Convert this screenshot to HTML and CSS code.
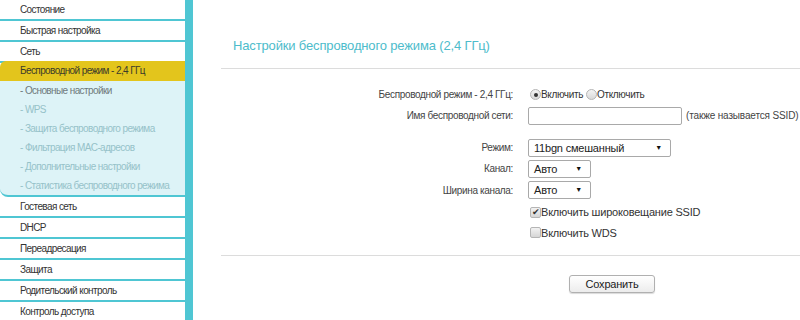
FILE: index.html
```html
<!DOCTYPE html>
<html lang="ru">
<head>
  <meta charset="UTF-8">
  <title>Настройки беспроводного режима</title>
  <link rel="stylesheet" href="styles.css">
</head>
<body>
  <div class="page">
    <div class="sidebar">
      <div class="menu-item">Состояние</div>
      <div class="menu-item">Быстрая настройка</div>
      <div class="menu-item">Сеть</div>
      <div class="menu-item active">Беспроводной режим - 2,4 ГГц</div>
      <div class="submenu">
        <div class="sub-item current">- Основные настройки</div>
        <div class="sub-item">- WPS</div>
        <div class="sub-item">- Защита беспроводного режима</div>
        <div class="sub-item">- Фильтрация MAC-адресов</div>
        <div class="sub-item">- Дополнительные настройки</div>
        <div class="sub-item">- Статистика беспроводного режима</div>
      </div>
      <div class="menu-item">Гостевая сеть</div>
      <div class="menu-item">DHCP</div>
      <div class="menu-item">Переадресация</div>
      <div class="menu-item">Защита</div>
      <div class="menu-item">Родительский контроль</div>
      <div class="menu-item">Контроль доступа</div>
    </div>

    <div class="main">
      <h1 class="title">Настройки беспроводного режима (2,4 ГГц)</h1>
      <hr class="line">

      <div class="form">
        <div class="row">
          <label class="label">Беспроводной режим - 2,4 ГГц:</label>
          <div class="field">
            <span class="radio checked"></span><span class="opt">Включить</span>
            <span class="radio"></span><span class="opt">Отключить</span>
          </div>
        </div>
        <div class="row">
          <label class="label">Имя беспроводной сети:</label>
          <div class="field">
            <input class="text" type="text">
            <span class="hint">(также называется SSID)</span>
          </div>
        </div>
        <div class="row spaced">
          <label class="label">Режим:</label>
          <div class="field">
            <div class="select wide">11bgn смешанный<span class="arrow">▼</span></div>
          </div>
        </div>
        <div class="row">
          <label class="label">Канал:</label>
          <div class="field">
            <div class="select small">Авто<span class="arrow">▼</span></div>
          </div>
        </div>
        <div class="row tall">
          <label class="label">Ширина канала:</label>
          <div class="field">
            <div class="select small">Авто<span class="arrow">▼</span></div>
          </div>
        </div>
        <div class="row tall">
          <span class="label"></span>
          <div class="field">
            <span class="check">✔</span><span class="opt big">Включить широковещание SSID</span>
          </div>
        </div>
        <div class="row short">
          <span class="label"></span>
          <div class="field">
            <span class="check"></span><span class="opt big">Включить WDS</span>
          </div>
        </div>
      </div>

      <hr class="line bottom">
      <div class="actions">
        <button class="save">Сохранить</button>
      </div>
    </div>
  </div>
</body>
</html>
```

FILE: styles.css
```css
body {
  margin: 0;
  font-family: "Liberation Sans", Arial, sans-serif;
  font-size: 10px;
  letter-spacing: -0.35px;
  color: #333;
  background: #fff;
}

.page {
  display: flex;
  height: 320px;
  overflow: hidden;
}

.sidebar {
  width: 185px;
  flex-shrink: 0;
  border-right: 8px solid #4fc6d3;
}

.menu-item {
  height: 19px;
  line-height: 19px;
  padding-left: 20px;
  border-bottom: 2px solid #4fc6d3;
  color: #333;
  white-space: nowrap;
  letter-spacing: -0.6px;
}

.menu-item.active {
  background: #e3c51c;
  border-bottom: none;
  border-top-left-radius: 6px;
  margin-top: -2px;
  height: 20px;
  line-height: 20px;
  color: #3b3b2a;
}

.submenu {
  background: #ddf3f7;
  border-bottom: 2px solid #4fc6d3;
  border-bottom-left-radius: 8px;
}

.sub-item {
  height: 19px;
  line-height: 19px;
  padding-left: 20px;
  color: #96c2c9;
  white-space: nowrap;
  letter-spacing: -0.6px;
}

.sub-item.current {
  color: #6f7a7c;
}

.main {
  flex: 1;
  min-width: 0;
  padding-left: 28px;
}

.title {
  margin: 38px 0 0 12px;
  font-size: 13px;
  letter-spacing: -0.15px;
  font-weight: normal;
  color: #4dbccb;
  height: 17px;
}

.line {
  margin: 13px 0 0 0;
  border: none;
  border-top: 1px solid #dcdcdc;
}

.form {
  padding-top: 15px;
}

.row {
  display: flex;
  align-items: center;
  height: 21px;
}

.row.spaced {
  margin-top: 11px;
}

.row.tall {
  height: 22px;
}

.row.short {
  height: 19px;
}

.label {
  width: 292px;
  text-align: right;
  padding-right: 15px;
  flex-shrink: 0;
  color: #444;
}

.field {
  display: flex;
  align-items: center;
  white-space: nowrap;
}

.radio {
  width: 9px;
  height: 9px;
  border: 1px solid #b5b5b5;
  border-radius: 50%;
  background: linear-gradient(#f4f4f4, #d9d9d9);
  display: inline-flex;
  align-items: center;
  justify-content: center;
  margin: 0 0 0 2px;
}

.radio.checked::after {
  content: "";
  width: 4px;
  height: 4px;
  border-radius: 50%;
  background: #333;
}

.opt {
  margin-right: 1px;
  color: #333;
}

.opt.big {
  font-size: 11px;
  letter-spacing: -0.2px;
}

.text {
  box-sizing: border-box;
  width: 154px;
  height: 18px;
  border: 1px solid #a9a9a9;
  border-radius: 2px;
  padding: 0;
  margin: 0 4px 0 0;
  flex-shrink: 0;
}

.hint {
  color: #444;
  font-size: 10px;
  letter-spacing: -0.15px;
}

.select {
  box-sizing: border-box;
  height: 18px;
  line-height: 16px;
  border: 1px solid #a9a9a9;
  border-radius: 2px;
  padding-left: 5px;
  padding-right: 8px;
  display: flex;
  justify-content: space-between;
  flex-shrink: 0;
  font-size: 11px;
  letter-spacing: -0.2px;
  color: #222;
}

.select.wide {
  width: 143px;
}

.select.small {
  width: 63px;
}

.arrow {
  font-size: 7px;
  color: #111;
}

.check {
  width: 9px;
  height: 9px;
  border: 1px solid #b5b5b5;
  border-radius: 2px;
  background: linear-gradient(#f2f2f2, #d6d6d6);
  display: inline-flex;
  align-items: center;
  justify-content: center;
  font-size: 9px;
  line-height: 9px;
  color: #333;
  margin: 0 0 0 2px;
}

.line.bottom {
  margin-top: 13px;
}

.actions {
  padding: 19px 0 0 348px;
}

.save {
  width: 86px;
  height: 18px;
  padding: 0;
  font-family: "Liberation Sans", Arial, sans-serif;
  font-size: 11px;
  letter-spacing: -0.2px;
  color: #222;
  border: 1px solid #b0b0b0;
  border-radius: 3px;
  background: linear-gradient(#ffffff, #ececec);
  box-shadow: 0 1px 1px rgba(0, 0, 0, 0.15);
}
```
